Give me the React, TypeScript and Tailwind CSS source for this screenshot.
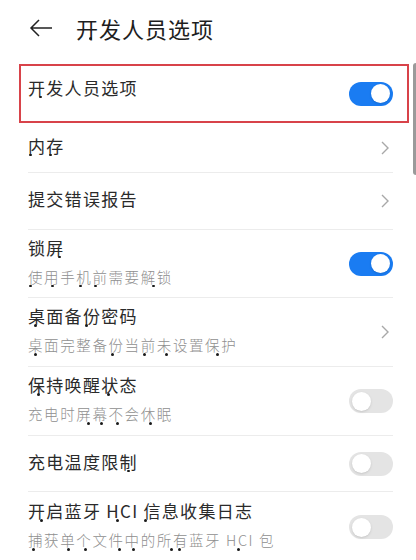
import React from 'react';

type Row = {
  title: string;
  titleDots?: number[];
  sub?: string;
  subDots?: number[];
  kind: 'on' | 'off' | 'chevron';
  h: string;
};

const rows: Row[] = [
  { title: '内存', titleDots: [2, 22], kind: 'chevron', h: 'h-[50px]' },
  { title: '提交错误报告', kind: 'chevron', h: 'h-[57px]' },
  {
    title: '锁屏',
    titleDots: [31],
    sub: '使用手机前需要解锁',
    subDots: [2, 24, 52, 67, 125],
    kind: 'on',
    h: 'h-[68px]',
  },
  {
    title: '桌面备份密码',
    titleDots: [7, 58],
    sub: '桌面完整备份当前未设置保护',
    subDots: [7, 84, 116, 138, 189],
    kind: 'chevron',
    h: 'h-[69px]',
  },
  {
    title: '保持唤醒状态',
    titleDots: [10, 80],
    sub: '充电时屏幕不会休眠',
    subDots: [60, 73, 89, 122],
    kind: 'off',
    h: 'h-[69px]',
  },
  { title: '充电温度限制', titleDots: [100], kind: 'off', h: 'h-[56px]' },
  {
    title: '开启蓝牙 HCI 信息收集日志',
    titleDots: [13, 89, 117],
    sub: '捕获单个文件中的所有蓝牙 HCI 包',
    subDots: [5, 40, 57, 91, 105, 143, 151, 210],
    kind: 'off',
    h: 'h-[70px]',
  },
];

// small black marks that sit under some characters in the source capture
const Dots = ({ xs, top }: { xs?: number[]; top: string }) => (
  <>
    {xs?.map((x) => (
      <span
        key={x}
        className={`absolute ${top} w-[2.5px] h-[2.5px] rounded-full bg-[#1a1a1a]`}
        style={{ left: x - 1 }}
      />
    ))}
  </>
);

const Toggle = ({ on }: { on: boolean }) => (
  <div
    className={
      on
        ? 'w-[44px] h-[24px] rounded-full bg-[#1a7cf2] flex items-center justify-end px-[3px]'
        : 'w-[44px] h-[24px] rounded-full bg-[#e4e4e4] flex items-center justify-start px-[3px]'
    }
  >
    <div className="w-[19px] h-[19px] rounded-full bg-white shadow-sm" />
  </div>
);

const Chevron = () => (
  <svg width="10" height="16" viewBox="0 0 10 16" className="mr-[3px]">
    <path d="M2 2 L8 8 L2 14" fill="none" stroke="#a8a8a8" strokeWidth="1.4" />
  </svg>
);

export default function App() {
  return (
    <div
      className="w-[416px] h-[560px] bg-white overflow-hidden relative"
      style={{ fontFamily: '"Noto Sans CJK SC", "Noto Sans", sans-serif' }}
    >
      {/* header */}
      <div className="h-[64px] flex items-center pl-[29px] pb-[8px]">
        <svg width="24" height="20" viewBox="0 0 24 20">
          <path d="M23 10 H2 M10 2 L2 10 L10 18" fill="none" stroke="#222" strokeWidth="1.5" />
        </svg>
        <span className="relative ml-[23px] text-[22px] leading-[30px] text-[#1e1e1e] tracking-[1px]">
          开发人员选项
          <Dots xs={[14]} top="top-[24px]" />
        </span>
      </div>

      {/* highlighted row */}
      <div className="mx-[19px] mr-[7px] h-[59px] border-2 border-[#d8434a] flex items-center justify-between pl-[7px] pr-[14px]">
        <span className="relative text-[17px] leading-[24px] tracking-[1.3px] text-[#2a2a2a] pb-[12px]">
          开发人员选项
          <Dots xs={[12]} top="top-[20px]" />
        </span>
        <Toggle on />
      </div>

      {/* scrollbar */}
      <div className="absolute right-0 top-[63px] w-[3px] h-[112px] bg-[#9a9a9a] rounded-l" />

      <div className="px-[28px] pr-[23px]">
        {rows.map((r, i) => (
          <div
            key={r.title}
            className={`${r.h} flex items-center justify-between ${i < rows.length - 1 ? 'border-b border-[#ececec]' : ''}`}
          >
            <div className="flex flex-col pb-[4px]">
              <span className="relative text-[17px] leading-[24px] tracking-[1.3px] text-[#2a2a2a]">
                {r.title}
                <Dots xs={r.titleDots} top="top-[20px]" />
              </span>
              {r.sub && (
                <span className="relative text-[14.5px] font-light leading-[22px] tracking-[1.6px] mt-[6px] text-[#8f8f8f]">
                  {r.sub}
                  <Dots xs={r.subDots} top="top-[19px]" />
                </span>
              )}
            </div>
            {r.kind === 'chevron' ? <Chevron /> : <Toggle on={r.kind === 'on'} />}
          </div>
        ))}
      </div>
    </div>
  );
}
